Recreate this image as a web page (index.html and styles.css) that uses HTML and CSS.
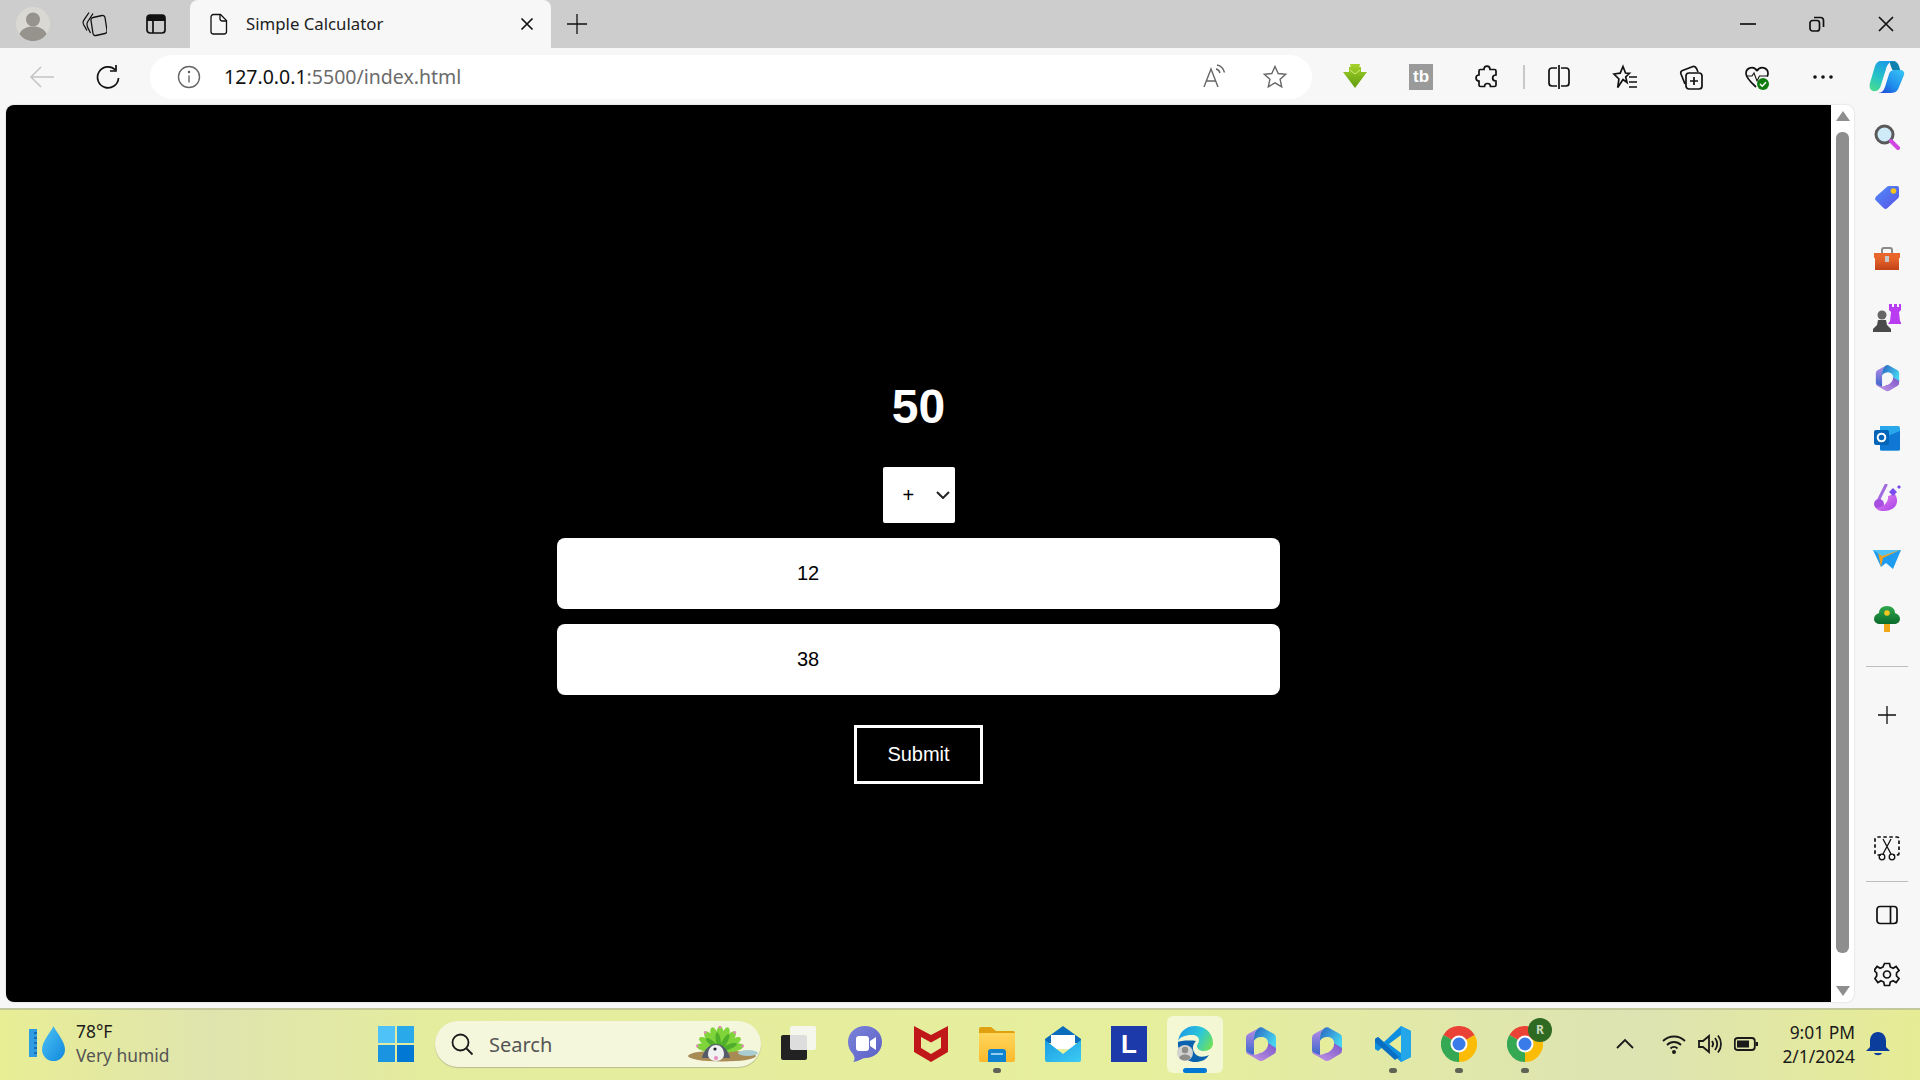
FILE: index.html
```html
<!DOCTYPE html>
<html lang="en">
<head>
<meta charset="utf-8">
<title>Simple Calculator</title>
<link rel="stylesheet" href="styles.css">
</head>
<body>
<svg class="defs" aria-hidden="true">
  <defs>
    <linearGradient id="gBlue" x1="0" y1="0" x2="1" y2="1"><stop offset="0" stop-color="#4fc3f7"/><stop offset="1" stop-color="#1088dc"/></linearGradient>
    <linearGradient id="mLeft" x1="0" y1="0" x2="0" y2="1"><stop offset="0" stop-color="#b98ae8"/><stop offset="1" stop-color="#2f66c8"/></linearGradient>
    <linearGradient id="mTop" x1="0" y1="0" x2="1" y2=".6"><stop offset="0" stop-color="#2a62c0"/><stop offset="1" stop-color="#45d3f0"/></linearGradient>
    <linearGradient id="mBottom" x1="1" y1="0" x2="0" y2="1"><stop offset="0" stop-color="#7a55c8"/><stop offset="1" stop-color="#c79be8"/></linearGradient>
    <linearGradient id="gMeet" x1="0" y1="0" x2="1" y2="1"><stop offset="0" stop-color="#7b83d8"/><stop offset="1" stop-color="#5b5fc7"/></linearGradient>
    <linearGradient id="gFolder" x1="0" y1="0" x2="0" y2="1"><stop offset="0" stop-color="#ffd65c"/><stop offset="1" stop-color="#fdb92c"/></linearGradient>
    <linearGradient id="gMail" x1="0" y1="0" x2="1" y2="1"><stop offset="0" stop-color="#1b9de2"/><stop offset="1" stop-color="#3ccbf4"/></linearGradient>
    <linearGradient id="gEdge" x1="0" y1=".3" x2="1" y2=".7"><stop offset="0" stop-color="#1e9be8"/><stop offset=".55" stop-color="#2cc7d8"/><stop offset="1" stop-color="#6fe05a"/></linearGradient>
    <linearGradient id="cLeft" x1=".6" y1="0" x2=".2" y2="1"><stop offset="0" stop-color="#1c9ce6"/><stop offset=".55" stop-color="#27c4c4"/><stop offset="1" stop-color="#48dc90"/></linearGradient>
    <linearGradient id="cRight" x1="1" y1="0" x2=".1" y2="1"><stop offset="0" stop-color="#3ac8f5"/><stop offset=".6" stop-color="#1f8cec"/><stop offset="1" stop-color="#2048d4"/></linearGradient>
    <linearGradient id="gArrow" x1="0" y1="0" x2="0" y2="1"><stop offset="0" stop-color="#a6d32a"/><stop offset="1" stop-color="#5f9c0e"/></linearGradient>
    <linearGradient id="gTag" x1="0" y1="0" x2="1" y2="1"><stop offset="0" stop-color="#4f8df7"/><stop offset="1" stop-color="#5a52e8"/></linearGradient>
    <linearGradient id="gBrush" x1="0" y1="0" x2="1" y2="1"><stop offset="0" stop-color="#e58af0"/><stop offset="1" stop-color="#a83fe8"/></linearGradient>
    <linearGradient id="gTool" x1="0" y1="0" x2="0" y2="1"><stop offset="0" stop-color="#e8662c"/><stop offset="1" stop-color="#c2421a"/></linearGradient>
    <linearGradient id="gTree" x1="0" y1="0" x2="0" y2="1"><stop offset="0" stop-color="#2fa84f"/><stop offset="1" stop-color="#0b6b2c"/></linearGradient>
    <g id="m365">
      <path d="M13 2.500 3 8Q1 9 1 12V24Q1 27 3 28L9 31V12Q9 6 13 2.500z" fill="url(#mLeft)"/>
      <path d="M31 20V24Q31 27 29 28L19 34Q16 36 13 34L3 28Q1 27 1 25Q10 32 16 26 22 25 23 17z" fill="url(#mBottom)"/>
      <path d="M13 2.500Q16 0 19 2.500L29 8Q31 9 31 12V22L23 17Q23 11 16 11 11 11 9 15V12Q9 6 13 2.500z" fill="url(#mTop)"/>
    </g>
    <g id="chrome">
      <path d="M18 18 2.400 9A18 18 0 0 1 33.600 9z" fill="#ea4335"/>
      <path d="M18 18 33.600 9A18 18 0 0 1 18 36z" fill="#fbbc05"/>
      <path d="M18 18 18 36A18 18 0 0 1 2.400 9z" fill="#34a853"/>
      <circle cx="18" cy="18" r="8.500" fill="#fff"/>
      <circle cx="18" cy="18" r="6.500" fill="#3a7bea"/>
    </g>
  </defs>
</svg>

<header class="tabstrip">
  <div class="slot-avatar">
    <svg class="ic34" viewBox="0 0 34 34"><circle cx="17" cy="17" r="17" fill="#d9d8d2"/><circle cx="17" cy="12.500" r="7" fill="#96938d"/><path d="M3.500 27c2-5 7-7.500 13.500-7.500S28.500 22 30.500 27c-3 4.500-8 7-13.500 7S6.500 31.500 3.500 27z" fill="#96938d"/></svg>
  </div>
  <div class="slot-tool">
    <svg class="ic26" viewBox="0 0 26 26"><path d="M12 6.500 21 4.500a2.500 2.500 0 0 1 3 2l2 13a2.500 2.500 0 0 1-2 3l-9 2a2.500 2.500 0 0 1-3-2L10 9.500a2.500 2.500 0 0 1 2-3z" class="ln"/><path d="M9.500 22 6.500 16c-1-2-1-3.500 0-5L12 2.500" class="ln"/><path d="M6 19.500 2.500 13.500c-.8-1.500-.7-2.900.2-4.200L8 1.500" class="ln"/></svg>
  </div>
  <div class="slot-tool-b">
    <svg class="ic24" viewBox="0 0 24 24"><rect x="3" y="3" width="18" height="18" rx="3" class="ln-b"/><path d="M3 6a3 3 0 0 1 3-3h12a3 3 0 0 1 3 3v3H3z" fill="#111"/><path d="M9 9v12" class="ln-b"/></svg>
  </div>
  <div class="tab">
    <svg class="ic24" viewBox="0 0 24 24"><path d="M6.500 2.500h7l6 6v11a2.500 2.500 0 0 1-2.500 2.500H6.500A2.500 2.500 0 0 1 4 19.500v-14.500a2.500 2.500 0 0 1 2.500-2.500z" class="ln"/><path d="M13 2.500v4a2.500 2.500 0 0 0 2.500 2.500h4" class="ln"/></svg>
    <span class="tab-title">Simple Calculator</span>
    <svg class="ic14 tab-close" viewBox="0 0 14 14"><path d="M1.500 1.500l11 11M12.500 1.500l-11 11" class="ln-b"/></svg>
  </div>
  <div class="slot-plus">
    <svg class="ic22" viewBox="0 0 22 22"><path d="M11 1v20M1 11h20" class="ln"/></svg>
  </div>
  <div class="window-controls">
    <div class="win-btn"><svg class="ic16" viewBox="0 0 16 16"><path d="M0 8h16" class="ln-b"/></svg></div>
    <div class="win-btn"><svg class="ic16" viewBox="0 0 16 16"><rect x="1" y="4.500" width="9.500" height="10.500" rx="2.500" class="ln-b"/><path d="M5 1.500h6.500A3 3 0 0 1 14.500 4.500V11" class="ln-b"/></svg></div>
    <div class="win-btn"><svg class="ic16" viewBox="0 0 16 16"><path d="M1 1l14 14M15 1L1 15" class="ln-b"/></svg></div>
  </div>
</header>

<nav class="toolbar">
  <div class="tb-slot first">
    <svg class="ic26" viewBox="0 0 26 26"><path d="M25 13H2M12 3 2 13l10 10" class="ln-muted"/></svg>
  </div>
  <div class="tb-slot">
    <svg class="ic26" viewBox="0 0 26 26"><path d="M20.500 6A10.500 10.500 0 1 0 23.500 14" class="ln-b"/><path d="M21 1v6h-6" class="ln-b"/></svg>
  </div>
  <div class="addressbar">
    <svg class="ic24" viewBox="0 0 24 24"><circle cx="12" cy="12" r="10.500" class="ln-gray"/><path d="M12 10.500V17.500" class="ln-gray"/><circle cx="12" cy="7" r="1.200" fill="#555"/></svg>
    <span class="url"><span class="url-host">127.0.0.1</span>:5500/index.html</span>
    <svg class="ic26 addr-read" viewBox="0 0 26 26"><path d="M2 23 9 5l7 18M4.500 17h9" class="ln-gray"/><path d="M14 5c2 .5 3.500 2 4 4M15 1c4 .8 6.500 3.500 7.500 7.500" class="ln-gray"/></svg>
    <svg class="ic26 addr-star" viewBox="0 0 26 26"><path d="M13 2.500l3.200 7 7.500.8-5.600 5 1.600 7.500L13 18.900l-6.700 3.900 1.600-7.500-5.600-5 7.500-.8z" class="ln-gray"/></svg>
  </div>
  <div class="tb-right">
    <div class="tb-slot"><svg class="ic26" viewBox="0 0 26 26"><path d="M8 0h10l-1 4h-8zM7 3h12v5h6L13 24 1 8h6z" fill="url(#gArrow)"/><path d="M8 6 13 10l5-4" fill="none" stroke="#d8ee7a" stroke-width="1"/></svg></div>
    <div class="tb-slot"><span class="tb-logo">tb</span></div>
    <div class="tb-slot"><svg class="ic26" viewBox="0 0 26 26"><path d="M10 5.500c0-4.500 6-4.500 6 0h4.500a1.500 1.500 0 0 1 1.500 1.500v4c-4.500 0-4.500 6 0 6v4a1.500 1.500 0 0 1-1.500 1.500h-4c0-4-6-4-6 0H6.500A1.500 1.500 0 0 1 5 21v-4c-4 0-4-6 0-6V7a1.500 1.500 0 0 1 1.500-1.500z" class="ln-b"/></svg></div>
    <div class="tb-sep"></div>
    <div class="tb-slot"><svg class="ic26" viewBox="0 0 26 26"><path d="M11 4H6a3 3 0 0 0-3 3v12a3 3 0 0 0 3 3h5M15 4h5a3 3 0 0 1 3 3v12a3 3 0 0 1-3 3h-5M13 1v24" class="ln-b"/></svg></div>
    <div class="tb-slot"><svg class="ic26" viewBox="0 0 26 26"><path d="M11 2.500l2.500 6.500 4 .3-3.800 3.700 1.300 5.500L11 15.500l-5.300 8 1.200-8.500L2 10l6.200-.8z" class="ln-b"/><path d="M17 13h8M17 18h8M17 23h8" class="ln-b"/></svg></div>
    <div class="tb-slot"><svg class="ic26" viewBox="0 0 26 26"><rect x="8" y="9" width="16" height="16" rx="3" class="ln-b"/><path d="M16 13v8M12 17h8" class="ln-b"/><path d="M7 20 3 10c-.5-1.500 0-3 1.500-3.500L15 2.500c1.500-.5 2.500 0 3.500 2L20 8" class="ln-b"/></svg></div>
    <div class="tb-slot"><svg class="ic26" viewBox="0 0 26 26"><path d="M13 7c-3-5.500-11-3.500-11 2.500C2 14 7 18.500 12 23M13 7c3-5.500 11-3.500 11 2.500 0 1-.3 2-.7 3" class="ln-b"/><path d="M2 12h6l2-3 3 8 2.500-5H24" class="ln-thin"/><circle cx="19" cy="20" r="6" fill="#107c10"/><path d="M16 20l2.200 2.200 3.800-4" fill="none" stroke="#fff" stroke-width="1.500"/></svg></div>
    <div class="tb-slot"><svg class="ic26" viewBox="0 0 26 26"><circle cx="5" cy="13" r="1.800" fill="#111"/><circle cx="13" cy="13" r="1.800" fill="#111"/><circle cx="21" cy="13" r="1.800" fill="#111"/></svg></div>
    <div class="tb-slot tb-last"><svg class="ic36" viewBox="0 0 36 34"><path d="M20 1h4c3 0 5 2 6 5l1.500 5-8-1c-2-3-2-7-3.500-9z" fill="#0f7fb0"/><path d="M25 10h6c3 0 5 2 4 5l-5 12c-1 3-3 6-8 6H9c4 0 6-3 7-6l4-13c1-3 3-4 5-4z" fill="url(#cRight)"/><path d="M12 1h12c-4 1-6 4-7 8l-5 16c-1 4-4 7-8 6-3-1-4-4-3-8L6 6c1-3 3-5 6-5z" fill="url(#cLeft)"/></svg></div>
  </div>
</nav>

<div class="main">
  <div class="viewport">
    <main class="page">
      <h1 class="result">50</h1>
      <select class="op"><option>+</option><option>-</option><option>*</option><option>/</option></select>
      <input class="num" type="text" value="12">
      <input class="num" type="text" value="38">
      <button class="submit" type="button">Submit</button>
    </main>
    <div class="scrollbar">
      <svg class="sb-arrow" viewBox="0 0 14 10"><path d="M7 0l7 10H0z" fill="#8e8e8e"/></svg>
      <div class="sb-thumb"></div>
      <svg class="sb-arrow sb-down" viewBox="0 0 14 10"><path d="M7 10 14 0H0z" fill="#8e8e8e"/></svg>
    </div>
  </div>
  <aside class="sidebar">
    <div class="sd-slot"><svg class="ic26" viewBox="0 0 26 26"><circle cx="10.500" cy="10.500" r="8.500" fill="#cfeaf8" stroke="#5a5a5a" stroke-width="3"/><path d="M17 17l7 7" stroke="#d146e0" stroke-width="4" stroke-linecap="round"/></svg></div>
    <div class="sd-slot"><svg class="ic26" viewBox="0 0 26 26"><path d="M15 2h8a2 2 0 0 1 2 2v8a3 3 0 0 1-1 2.200L13.500 24a3 3 0 0 1-4 0L2 16.500a3 3 0 0 1 0-4L12.800 3A3 3 0 0 1 15 2z" fill="url(#gTag)"/><circle cx="19.500" cy="7" r="2.800" fill="#f5c518"/></svg></div>
    <div class="sd-slot"><svg class="ic28" viewBox="0 0 28 28"><path d="M9 10V7a2 2 0 0 1 2-2h6a2 2 0 0 1 2 2v3" fill="none" stroke="#8a8a8a" stroke-width="2"/><path d="M1 10h26v5H1z" fill="#e8662c"/><path d="M2 15h24v12H2z" fill="url(#gTool)"/><rect x="12" y="13" width="4" height="6" fill="#c9c9c9"/></svg></div>
    <div class="sd-slot"><svg class="ic28" viewBox="0 0 28 28"><path d="M16 0h3v3h2V0h3v3h2V0h2v6l-2 2 1 9 2 3H15l2-3 1-9-2-2z" fill="#b93cf2"/><circle cx="9" cy="11" r="4.500" fill="#666"/><path d="M5 16h8l1 5 4 4v3H0v-3l4-4z" fill="#4a4a4a"/></svg></div>
    <div class="sd-slot"><svg class="ic-m365-sm" viewBox="0 0 32 36"><use href="#m365"/><path d="M9 15l7-4c4 0 7 3 7 7 0 4-3 7-7 9-4-2-7-5-7-9z" fill="#f7f7f7"/></svg></div>
    <div class="sd-slot"><svg class="ic26" viewBox="0 0 26 26"><path d="M6 1h18a2 2 0 0 1 2 2v21a1.500 1.500 0 0 1-1.500 1.500H6z" fill="#28a8ea"/><path d="M6 14 26 6v18a1.500 1.500 0 0 1-1.500 1.500H8a2 2 0 0 1-2-2z" fill="#0f78d4"/><rect y="5" width="15" height="15" rx="2" fill="#0364b8"/><circle cx="7.500" cy="12.500" r="3.800" fill="none" stroke="#fff" stroke-width="2"/></svg></div>
    <div class="sd-slot"><svg class="ic28" viewBox="0 0 28 28"><path d="M13 1 6 15" stroke="#a36be0" stroke-width="3" stroke-linecap="round"/><circle cx="6" cy="20" r="5" fill="#a64fe0"/><path d="M22 10c6 10-2 18-13 17-2 0-5-1-6-3 7 0 13-6 12-12z" fill="url(#gBrush)"/><path d="M20 4l4 4-4 4-4-4zM26 1l2 2-2 2-2-2z" fill="#7a4bf0"/></svg></div>
    <div class="sd-slot"><svg class="ic28" viewBox="0 0 28 28"><path d="M0 6h28L20 25l-7-6-5 4z" fill="#1f9cf0"/><path d="M5 8l22-2-17 8-2 9z" fill="#f0a020"/><path d="M0 6h27L9 12z" fill="#4fc3f7"/></svg></div>
    <div class="sd-slot"><svg class="ic26" viewBox="0 0 26 26"><rect x="10" y="16" width="6" height="10" fill="#f0a818"/><path d="M13 0c5 0 8 3 8 7 3 1 5 3 5 6 0 3-3 5-6 5H6c-3 0-6-2-6-5 0-3 2-5 5-6 0-4 3-7 8-7z" fill="url(#gTree)"/><circle cx="13" cy="7" r="2.800" fill="#f7c520"/></svg></div>
    <div class="sd-sep sd-sep-a"></div>
    <div class="sd-slot"><svg class="ic18" viewBox="0 0 18 18"><path d="M9 0v18M0 9h18" class="ln"/></svg></div>
    <div class="sd-slot sd-push"><svg class="ic26" viewBox="0 0 26 26"><path d="M7 20H3a2 2 0 0 1-2-2V4a2 2 0 0 1 2-2h20a2 2 0 0 1 2 2v14a2 2 0 0 1-2 2h-4" class="ln-dash"/><path d="M9 4l8 15M17 4 9 19" class="ln"/><circle cx="8" cy="22" r="2.800" class="ln"/><circle cx="18" cy="22" r="2.800" class="ln"/></svg></div>
    <div class="sd-sep"></div>
    <div class="sd-slot"><svg class="ic24" viewBox="0 0 24 24"><rect x="2" y="3.500" width="20" height="17" rx="3" class="ln-b"/><path d="M15.500 3.500v17" class="ln-b"/></svg></div>
    <div class="sd-slot"><svg class="ic26" viewBox="0 0 26 26"><path d="M10.500 1.500h5l.8 3.500 2.800 1.200 3-1.800 3 4-2.600 2.600v3l2.600 2.600-3 4-3-1.800-2.800 1.200-.8 3.500h-5l-.8-3.500-2.800-1.200-3 1.800-3-4L2.700 14v-3L.100 8.400l3-4 3 1.800L8.900 5z" class="ln-b"/><circle cx="13" cy="12.500" r="3.500" class="ln-b"/></svg></div>
  </aside>
</div>

<footer class="taskbar">
  <div class="weather">
    <svg class="ic36" viewBox="0 0 36 36"><rect y="3" width="8" height="28" fill="#2f9be0"/><path d="M5 7h3M5 12h3M5 17h3M5 22h3M5 27h3" stroke="#0f5fa8" stroke-width="1.400"/><path d="M24.500 0C27 6 36 15 36 23.500a11.500 11.500 0 0 1-23 0C13 15 22 6 24.500 0z" fill="url(#gBlue)"/></svg>
    <div class="weather-text"><span class="temp">78°F</span><span class="cond">Very humid</span></div>
  </div>
  <div class="dock">
    <div class="dk-slot"><svg class="ic36" viewBox="0 0 36 36"><rect width="17" height="17" fill="#4fc3f7"/><rect x="19" width="17" height="17" fill="#29a9ea"/><rect y="19" width="17" height="17" fill="#1a94e0"/><rect x="19" y="19" width="17" height="17" fill="#0078d4"/></svg></div>
    <div class="searchbox">
      <svg class="ic24" viewBox="0 0 24 24"><circle cx="10.500" cy="10.500" r="8" class="ln-dark"/><path d="M16.500 16.500l6 6" class="ln-dark"/></svg>
      <span class="search-label">Search</span>
      <svg class="doodle" viewBox="0 0 70 36"><ellipse cx="34" cy="30" rx="34" ry="5.500" fill="#a88a55"/><ellipse cx="60" cy="27" rx="10" ry="3" fill="#a9cdd0"/>
        <g fill="#7fd43a"><ellipse cx="32" cy="11" rx="4" ry="11" transform="rotate(-80 32 24)"/><ellipse cx="32" cy="11" rx="4" ry="11" transform="rotate(-60 32 24)"/><ellipse cx="32" cy="11" rx="4" ry="11" transform="rotate(-40 32 24)"/><ellipse cx="32" cy="11" rx="4" ry="11" transform="rotate(-20 32 24)"/><ellipse cx="32" cy="11" rx="4" ry="11"/><ellipse cx="32" cy="11" rx="4" ry="11" transform="rotate(20 32 24)"/><ellipse cx="32" cy="11" rx="4" ry="11" transform="rotate(40 32 24)"/><ellipse cx="32" cy="11" rx="4" ry="11" transform="rotate(60 32 24)"/><ellipse cx="32" cy="11" rx="4" ry="11" transform="rotate(80 32 24)"/></g>
        <g fill="#4fae2a"><ellipse cx="32" cy="14" rx="2.500" ry="8" transform="rotate(-50 32 24)"/><ellipse cx="32" cy="14" rx="2.500" ry="8" transform="rotate(-10 32 24)"/><ellipse cx="32" cy="14" rx="2.500" ry="8" transform="rotate(30 32 24)"/><ellipse cx="32" cy="14" rx="2.500" ry="8" transform="rotate(70 32 24)"/></g>
        <g fill="#e88ac0"><circle cx="32" cy="1" r="1.400" transform="rotate(-40 32 24)"/><circle cx="32" cy="1" r="1.400"/><circle cx="32" cy="1" r="1.400" transform="rotate(40 32 24)"/><circle cx="32" cy="1" r="1.400" transform="rotate(80 32 24)"/><circle cx="32" cy="1" r="1.400" transform="rotate(-80 32 24)"/></g>
        <path d="M14 32c2-9 8-14 14-14s12 5 14 14z" fill="#555b68"/><path d="M20 29c0-7 4-10 8-10s8 3 8 10c0 3-4 6-8 6s-8-3-8-6z" fill="#f0f2f2"/><circle cx="27" cy="23" r="1.600" fill="#223"/><circle cx="28" cy="32" r="2" fill="#e88ac0"/></svg>
    </div>
    <div class="dk-slot dk-task"><svg class="ic36" viewBox="0 0 36 36"><rect x="0" y="9" width="26" height="25" rx="2" fill="#222"/><rect x="9" y="0" width="26" height="24" rx="2" fill="#f7f7f7" fill-opacity=".88"/></svg></div>
    <div class="dk-slot"><svg class="ic36" viewBox="0 0 36 36"><path d="M18 0c10 0 17 7 17 16s-7 16-17 16c-3 0-5 3-12 4 3-3 1-6 0-8-3-3-5-7-5-12C1 7 8 0 18 0z" fill="url(#gMeet)"/><rect x="9" y="10" width="13" height="15" rx="3" fill="#fff"/><path d="M23 15l6-4v13l-6-4z" fill="#fff"/></svg></div>
    <div class="dk-slot"><svg class="ic36" viewBox="0 0 36 36"><path d="M1 0l17 9 17-9v26L18 36 1 26z" fill="#c01818"/><path d="M8 11l10 5.500L28 11v11l-10 6-10-6z" fill="#e6ee9c"/></svg></div>
    <div class="dk-slot"><svg class="ic36" viewBox="0 0 36 36"><path d="M0 3a2 2 0 0 1 2-2h10l5 4h17a2 2 0 0 1 2 2v3H0z" fill="#e0a010"/><path d="M0 7h36v27a2 2 0 0 1-2 2H2a2 2 0 0 1-2-2z" fill="url(#gFolder)"/><path d="M9 26a3 3 0 0 1 3-3h12a3 3 0 0 1 3 3v10H9z" fill="#1083d0"/><path d="M12 28h12" stroke="#bfe6fa" stroke-width="1.500"/></svg><span class="dk-dot"></span></div>
    <div class="dk-slot"><svg class="ic36" viewBox="0 0 36 36"><path d="M18 0l18 13v4H0v-4z" fill="#0a6cbd"/><path d="M6 9h24v14H6z" fill="#fff"/><path d="M0 14l18 14 18-14v20a2 2 0 0 1-2 2H2a2 2 0 0 1-2-2z" fill="url(#gMail)"/></svg></div>
    <div class="dk-slot"><span class="tile-l">L</span></div>
    <div class="dk-slot dk-active">
      <svg class="ic36" viewBox="0 0 36 36"><path d="M1 16C2 6 9 0 18 0c10 0 18 7 18 17 0 5-4 8-9 8-4 0-7-2-7-5 0-2 2-3 2-6s-3-5-7-5C8 9 2 11 1 16z" fill="url(#gEdge)"/><path d="M1 16c-1 10 7 20 17 20 6 0 11-2 14-7-6 3-13 2-15-3-2-4-1-8 2-11-7-1-17 0-18 1z" fill="#0b63b0"/><circle cx="8" cy="27" r="8" fill="#d2d2d0"/><circle cx="8" cy="24" r="3.200" fill="#8d8d8a"/><ellipse cx="8" cy="31.500" rx="5.500" ry="3" fill="#8d8d8a"/></svg>
      <span class="dk-indicator"></span>
    </div>
    <div class="dk-slot"><svg class="ic-m365" viewBox="0 0 32 36"><use href="#m365"/><path d="M9 15l7-4c4 0 7 3 7 7 0 4-3 7-7 9-4-2-7-5-7-9z" fill="#e6ee9c"/></svg></div>
    <div class="dk-slot"><svg class="ic-m365" viewBox="0 0 32 36"><use href="#m365"/><path d="M9 15l7-4c4 0 7 3 7 7 0 4-3 7-7 9-4-2-7-5-7-9z" fill="#e6ee9c"/></svg></div>
    <div class="dk-slot">
      <svg class="ic36" viewBox="0 0 36 36"><path d="M26 0l10 5v26l-10 5L9 20l-6 5-3-2v-10l3-2 6 5z" fill="#0f8fe0"/><path d="M26 9v18L14 18z" fill="#e6ee9c"/><path d="M26 0l10 5v26l-10 5z" fill="#23a7ea"/><path d="M0 13l3-2 21 20-4 3L0 16z" fill="#0a6fc2"/></svg>
      <span class="dk-dot"></span>
    </div>
    <div class="dk-slot">
      <svg class="ic36" viewBox="0 0 36 36"><use href="#chrome"/></svg>
      <span class="dk-dot"></span>
    </div>
    <div class="dk-slot">
      <svg class="ic36" viewBox="0 0 36 36"><use href="#chrome"/></svg>
      <span class="dk-badge">R</span>
      <span class="dk-dot"></span>
    </div>
  </div>
  <div class="tray">
    <svg class="ic18 tray-chevron" viewBox="0 0 18 18"><path d="M1 13l8-8 8 8" class="ln-dark"/></svg>
    <svg class="ic24 tray-icon" viewBox="0 0 24 24"><path d="M1 9c6-6 16-6 22 0M5 13c4-4 10-4 14 0M8.500 16.500c2-2 5-2 7 0" class="ln-dark"/><circle cx="12" cy="20" r="2" fill="#1a1a1a"/></svg>
    <svg class="ic24 tray-icon" viewBox="0 0 24 24"><path d="M1 9h4l6-5v16l-6-5H1z" class="ln-dark"/><path d="M14 9c1.500 2 1.500 4 0 6M17 6c3 4 3 8 0 12M20 3.500c4 5 4 12 0 17" class="ln-dark"/></svg>
    <svg class="ic24 tray-icon" viewBox="0 0 24 24"><rect x=".8" y="6" width="20" height="12" rx="3" class="ln-dark"/><rect x="3" y="8.500" width="12" height="7" fill="#1a1a1a"/><rect x="21.500" y="10" width="2.500" height="4" fill="#1a1a1a"/></svg>
    <div class="clock"><span>9:01 PM</span><span>2/1/2024</span></div>
    <svg class="ic24 bell" viewBox="0 0 24 24"><path d="M12 0c5 0 8 4 8 9v6l4 4H0l4-4V9c0-5 3-9 8-9z" fill="#0a3d9c"/><path d="M8 21h8c-1 3-7 3-8 0z" fill="#0a3d9c"/></svg>
  </div>
</footer>
</body>
</html>
```

FILE: styles.css
```css
* { box-sizing: border-box; }

html, body { margin: 0; height: 100%; }

body {
  display: flex;
  flex-direction: column;
  height: 1080px;
  overflow: hidden;
  background: #f7f7f7;
  font-family: "Noto Sans", "Open Sans", sans-serif;
  color: #1a1a1a;
}

.defs { width: 0; height: 0; position: absolute; }

svg { display: block; flex: none; }
.ic14 { width: 14px; height: 14px; }
.ic16 { width: 16px; height: 16px; }
.ic18 { width: 18px; height: 18px; }
.ic22 { width: 22px; height: 22px; }
.ic24 { width: 24px; height: 24px; }
.ic26 { width: 26px; height: 26px; }
.ic28 { width: 28px; height: 28px; }
.ic34 { width: 34px; height: 34px; }
.ic36 { width: 36px; height: 36px; }
.ic-m365 { width: 32px; height: 36px; }
.ic-m365-sm { width: 25px; height: 28px; }

.ln { fill: none; stroke: #111; stroke-width: 1.3; }
.ln-b { fill: none; stroke: #111; stroke-width: 1.7; }
.ln-thin { fill: none; stroke: #111; stroke-width: 1.1; }
.ln-dark { fill: none; stroke: #1a1a1a; stroke-width: 1.8; }
.ln-gray { fill: none; stroke: #666; stroke-width: 1.4; }
.ln-muted { fill: none; stroke: #c4c4c4; stroke-width: 1.5; }
.ln-dash { fill: none; stroke: #111; stroke-width: 1.7; stroke-dasharray: 3.5 2.5; }

/* Tab strip */
.tabstrip {
  display: flex;
  align-items: center;
  height: 48px;
  flex: none;
  background: #cdcdcd;
}
.slot-avatar { width: 66px; display: flex; justify-content: center; }
.slot-tool { width: 55px; display: flex; justify-content: center; }
.slot-tool-b { width: 69px; display: flex; justify-content: center; }
.tab {
  display: flex;
  align-items: center;
  align-self: flex-end;
  width: 361px;
  height: 48px;
  padding: 0 17px;
  background: #f7f7f7;
  border-radius: 8px 8px 0 0;
}
.tab-title { margin: 0 0 2px 15px; font-size: 16.8px; color: #222; }
.tab-close { margin-left: auto; }
.slot-plus { width: 51px; display: flex; justify-content: center; }
.window-controls { display: flex; margin-left: auto; }
.win-btn { width: 69px; display: flex; justify-content: center; }

/* Toolbar */
.toolbar {
  display: flex;
  align-items: center;
  height: 57px;
  flex: none;
  padding-left: 9px;
  background: #f7f7f7;
}
.tb-slot { width: 66px; display: flex; justify-content: center; align-items: center; flex: none; }
.tb-last { width: 62px; }
.addressbar {
  display: flex;
  align-items: center;
  flex: none;
  width: 1162px;
  height: 44px;
  margin-left: 9px;
  padding-left: 27px;
  background: #fff;
  border-radius: 22px;
}
.url { margin-left: 23px; font-size: 19.5px; color: #6b6b6b; }
.url-host { color: #111; }
.addr-read { margin-left: auto; }
.addr-star { margin-left: 34px; margin-right: 24px; }
.tb-right { display: flex; align-items: center; flex: none; margin-left: 10px; }
.tb-sep { width: 2px; height: 24px; margin: 0 1px 0 3px; background: #c8c8c8; }
.tb-logo {
  display: block;
  width: 24px;
  height: 26px;
  background: #9a9a9a;
  color: #fff;
  font: bold 17px/26px "Liberation Sans", sans-serif;
  text-align: center;
}

/* Main area */
.main {
  display: flex;
  height: 903px;
  flex: none;
  background: #f7f7f7;
}
.viewport {
  display: flex;
  width: 1848px;
  height: 897px;
  margin-left: 6px;
  background: #fff;
  border-radius: 8px;
  overflow: hidden;
  box-shadow: 0 0 2px rgba(0, 0, 0, .18);
}
.page {
  display: flex;
  flex-direction: column;
  align-items: center;
  width: 1825px;
  padding-top: 274px;
  background: #000;
  font-family: "Liberation Sans", Arial, sans-serif;
}
.result {
  margin: 0 0 33px;
  font-size: 48px;
  line-height: 55px;
  font-weight: bold;
  color: #fff;
}
.op {
  appearance: none;
  width: 72px;
  height: 56px;
  padding: 0 0 0 20px;
  border: 0;
  border-radius: 2px;
  color: #000;
  font: 20px "Liberation Sans", Arial, sans-serif;
  background: #fff url("data:image/svg+xml,%3Csvg xmlns='http://www.w3.org/2000/svg' viewBox='0 0 14 8'%3E%3Cpath d='M1 1l6 6 6-6' fill='none' stroke='%23222' stroke-width='2'/%3E%3C/svg%3E") no-repeat right 5px center / 14px 8px;
}
.num {
  display: block;
  width: 723px;
  height: 71px;
  margin-top: 15px;
  padding: 0 0 0 240px;
  border: 0;
  border-radius: 8px;
  background: #fff;
  color: #000;
  font: 20px "Liberation Sans", Arial, sans-serif;
}
.submit {
  width: 129px;
  height: 59px;
  margin-top: 30px;
  border: 3px solid #fff;
  background: #000;
  color: #fff;
  font: 20px "Liberation Sans", Arial, sans-serif;
}

/* Scrollbar */
.scrollbar {
  display: flex;
  flex-direction: column;
  align-items: center;
  width: 23px;
  padding: 6px 0;
}
.sb-arrow { width: 14px; height: 10px; }
.sb-thumb { width: 13px; height: 821px; margin-top: 11px; background: #8e8e8e; border-radius: 6px; }
.sb-down { margin-top: auto; }

/* Sidebar */
.sidebar {
  display: flex;
  flex-direction: column;
  align-items: center;
  width: 66px;
  padding: 2px 0 3px;
}
.sd-slot { display: flex; align-items: center; justify-content: center; height: 60.2px; width: 100%; flex: none; }
.sd-sep { width: 42px; height: 1px; flex: none; margin: 3px 0; background: #bdbdbd; }
.sd-sep-a { margin: 17px 0 18px; }
.sd-push { margin-top: auto; }

/* Taskbar */
.taskbar {
  display: flex;
  align-items: center;
  height: 72px;
  flex: none;
  padding-bottom: 2px;
  border-top: 2px solid #c3c89a;
  background: linear-gradient(90deg, #e8ee94 0%, #dfe4ae 11%, #e4ec9e 22%, #e6ef9c 60%, #dde3b2 85%, #e6ec94 100%);
}
.weather { display: flex; align-items: center; width: 363px; flex: none; padding-left: 29px; }
.weather-text { display: flex; flex-direction: column; margin: 0 0 2px 11px; font-size: 17.4px; line-height: 24px; }
.temp { color: #1a1a1a; }
.cond { color: #555; }
.dock { display: flex; align-items: center; height: 68px; }
.dk-slot {
  position: relative;
  display: flex;
  align-items: center;
  justify-content: center;
  width: 66px;
  height: 68px;
  flex: none;
}
.dk-task { margin-left: 5px; }
.dk-active::before {
  content: "";
  position: absolute;
  top: 6px;
  left: 5px;
  width: 56px;
  height: 57px;
  background: rgba(255, 255, 255, .55);
  border-radius: 6px;
}
.dk-active svg { position: relative; }
.dk-indicator {
  position: absolute;
  left: 21px;
  top: 58px;
  width: 24px;
  height: 5px;
  border-radius: 3px;
  background: #0078d4;
}
.dk-dot {
  position: absolute;
  left: 29px;
  top: 58px;
  width: 8px;
  height: 5px;
  border-radius: 3px;
  background: #5f6355;
}
.dk-badge {
  position: absolute;
  left: 36px;
  top: 8px;
  width: 24px;
  height: 24px;
  border-radius: 50%;
  background: #2f6a22;
  color: #c9d9c0;
  font: bold 12px/24px "Noto Sans", sans-serif;
  text-align: center;
}
.tile-l {
  display: block;
  width: 36px;
  height: 36px;
  background: #1c3aa9;
  color: #fff;
  font: bold 26px/36px "Liberation Sans", sans-serif;
  text-align: center;
}
.searchbox {
  display: flex;
  align-items: center;
  width: 326px;
  height: 46px;
  margin-left: 6px;
  padding: 0 3px 0 15px;
  border-radius: 23px;
  background: #f4f7dc;
  box-shadow: 0 1px 1px #b9bd90;
}
.search-label { margin-left: 15px; font-size: 20px; color: #555; }
.doodle { width: 70px; height: 36px; margin-left: auto; }
.tray { display: flex; align-items: center; margin-left: auto; height: 68px; }
.tray-chevron { margin-right: 28px; }
.tray-icon { margin-right: 12px; }
.clock {
  display: flex;
  flex-direction: column;
  align-items: flex-end;
  width: 85px;
  font-size: 17.4px;
  line-height: 24px;
  color: #1a1a1a;
}
.bell { margin: 0 30px 0 11px; }
```
